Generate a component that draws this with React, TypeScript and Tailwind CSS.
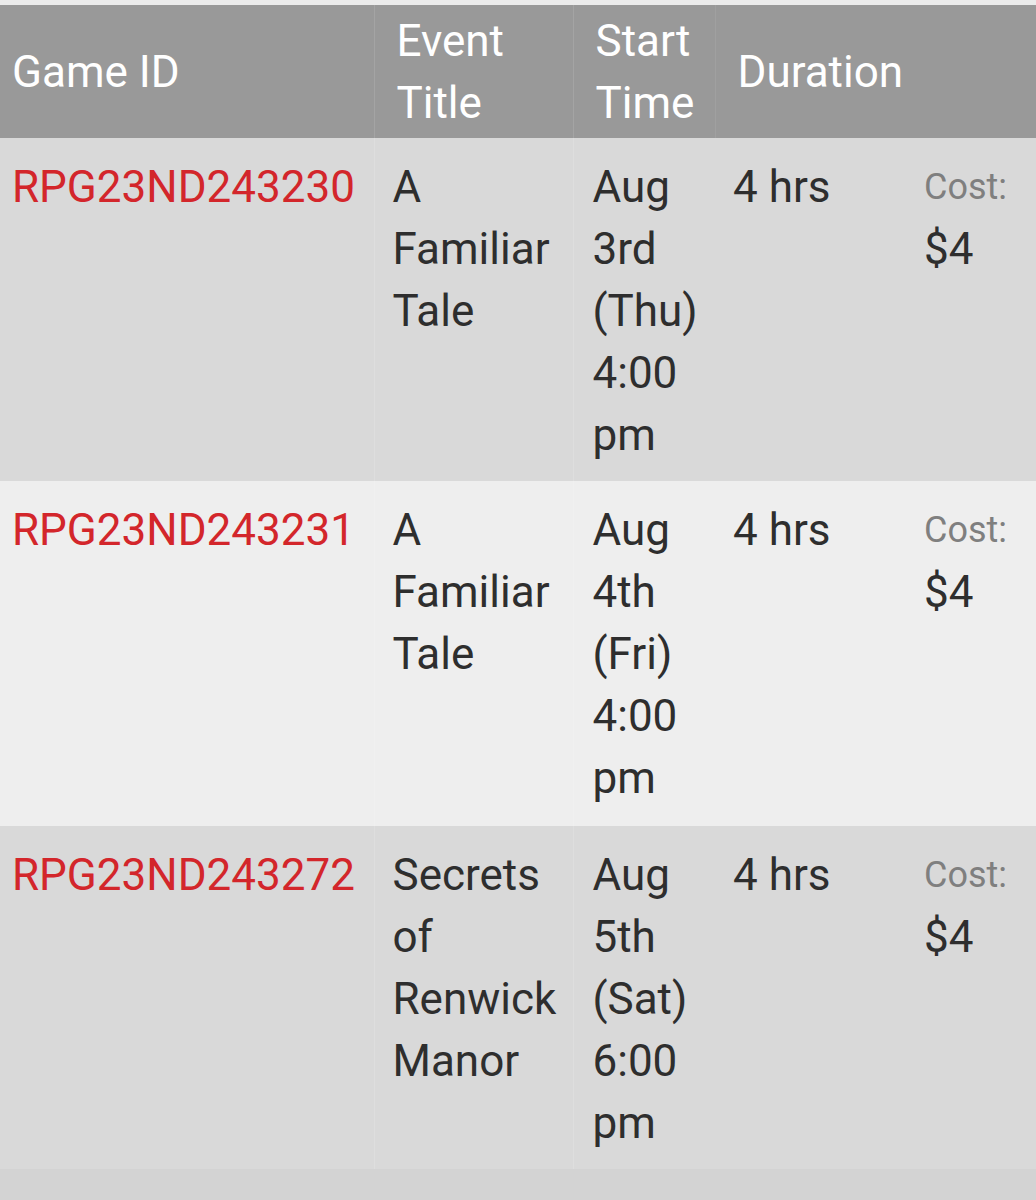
import React from "react";

type Game = {
  id: string;
  title: string;
  start: string;
  duration: string;
  cost: string;
};

const games: Game[] = [
  { id: "RPG23ND243230", title: "A Familiar Tale", start: "Aug 3rd (Thu) 4:00 pm", duration: "4 hrs", cost: "$4" },
  { id: "RPG23ND243231", title: "A Familiar Tale", start: "Aug 4th (Fri) 4:00 pm", duration: "4 hrs", cost: "$4" },
  { id: "RPG23ND243272", title: "Secrets of Renwick Manor", start: "Aug 5th (Sat) 6:00 pm", duration: "4 hrs", cost: "$4" },
];

export default function App() {
  return (
    <div
      className="min-h-[1200px] w-[1036px] overflow-hidden bg-[#d3d3d3] pt-[5px]"
      style={{ fontFamily: "Roboto, 'Liberation Sans', sans-serif" }}
    >
      <div className="-mt-[5px] h-[5px] bg-[#ebebeb]" />
      <table className="w-[1036px] table-fixed border-collapse text-[44px] leading-[62px]">
        <colgroup>
          <col className="w-[374px]" />
          <col className="w-[199px]" />
          <col className="w-[142px]" />
          <col className="w-[191px]" />
          <col className="w-[130px]" />
        </colgroup>
        <thead>
          <tr className="bg-[#999999] text-white">
            <th className="h-[133px] border-r border-[#a4a4a4] pl-3 pr-2 text-left align-middle font-normal">
              Game ID
            </th>
            <th className="border-r border-[#a4a4a4] pl-[22px] pr-2 text-left align-middle font-normal">
              Event Title
            </th>
            <th className="border-r border-[#a0a0a0] pl-[22px] pr-0 text-left align-middle font-normal">
              Start Time
            </th>
            <th className="pl-[22px] pr-0 text-left align-middle font-normal whitespace-nowrap">
              Duration
            </th>
            <th className="font-normal" />
          </tr>
        </thead>
        <tbody>
          {games.map((g, i) => (
            <tr
              key={g.id}
              className={i % 2 === 0 ? "bg-[#d9d9d9] text-[#2e2e2e]" : "bg-[#eeeeee] text-[#2e2e2e]"}
            >
              <td
                className={`${i === 1 ? "h-[345px]" : "h-[343px]"} border-r pl-3 pr-2 pt-[18px] pb-4 align-top text-[#d3262b] ${
                  i % 2 === 0 ? "border-[#dedede]" : "border-[#f0f0f0]"
                }`}
              >
                {g.id}
              </td>
              <td
                className={`border-r pl-[18px] pr-2 pt-[18px] align-top ${
                  i % 2 === 0 ? "border-[#dedede]" : "border-[#f0f0f0]"
                }`}
              >
                {g.title}
              </td>
              <td className="pl-[19px] pr-1 pt-[18px] align-top">{g.start}</td>
              <td className="pl-[18px] pt-[18px] align-top whitespace-nowrap">{g.duration}</td>
              <td className="pl-[18px] pt-[18px] align-top">
                <div className="text-[36px] leading-[62px] text-[#7f7f7f]">Cost:</div>
                <div>{g.cost}</div>
              </td>
            </tr>
          ))}
        </tbody>
      </table>
    </div>
  );
}
